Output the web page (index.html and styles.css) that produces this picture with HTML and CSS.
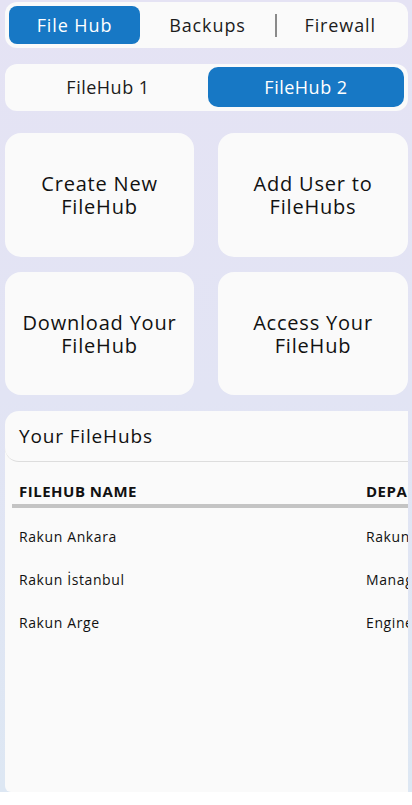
FILE: index.html
```html
<!DOCTYPE html>
<html lang="en">
<head>
<meta charset="utf-8">
<title>FileHub</title>
<link rel="stylesheet" href="styles.css">
</head>
<body>
<div class="app">
  <nav class="tabs">
    <div class="tab active">File Hub</div>
    <div class="tab">Backups</div>
    <div class="sep"></div>
    <div class="tab">Firewall</div>
  </nav>
  <div class="segment">
    <div class="seg">FileHub 1</div>
    <div class="seg active">FileHub 2</div>
  </div>
  <div class="cards">
    <div class="card">Create New<br>FileHub</div>
    <div class="card">Add User to<br>FileHubs</div>
    <div class="card">Download Your<br>FileHub</div>
    <div class="card">Access Your<br>FileHub</div>
  </div>
  <section class="panel">
    <div class="panel-head">Your FileHubs</div>
    <div class="table">
      <div class="row head">
        <div class="c1">FILEHUB NAME</div>
        <div class="c2">DEPARTMENT</div>
      </div>
      <div class="row">
        <div class="c1">Rakun Ankara</div>
        <div class="c2">Rakun</div>
      </div>
      <div class="row">
        <div class="c1">Rakun İstanbul</div>
        <div class="c2">Management</div>
      </div>
      <div class="row">
        <div class="c1">Rakun Arge</div>
        <div class="c2">Engineering</div>
      </div>
    </div>
  </section>
</div>
</body>
</html>
```
FILE: styles.css
```css
* { box-sizing: border-box; }
html, body { margin: 0; padding: 0; background: #ffffff; }
body {
  font-family: "Open Sans", "Noto Sans", sans-serif;
  color: #1a1a1a;
  width: 412px;
  overflow: hidden;
}
.app {
  height: 792px;
  background: linear-gradient(180deg, #e5e3f4 0%, #e2e4f4 50%, #dde7f3 100%);
  padding: 2px 4px 0 5px;
  display: flex;
  flex-direction: column;
  overflow: hidden;
}
.tabs {
  height: 46px;
  background: #fafafa;
  border-radius: 12px;
  display: flex;
  align-items: center;
  padding: 4px;
}
.tab {
  height: 38px;
  display: flex;
  align-items: center;
  justify-content: center;
  font-size: 18px;
  letter-spacing: 0.9px;
  color: #1c1c1c;
  flex: 1;
}
.tab.active {
  flex: 0 0 131px;
  background: #1778c5;
  color: #ffffff;
  border-radius: 8px;
}
.tabs .tab:nth-child(2) { flex: 0 0 135px; }
.sep {
  width: 1.5px;
  height: 23px;
  background: #8a8a8a;
}
.segment {
  margin-top: 16px;
  height: 47px;
  background: #fafafa;
  border-radius: 12px;
  display: flex;
  padding: 3px 4px 4px 3px;
}
.seg {
  flex: 1;
  display: flex;
  align-items: center;
  justify-content: center;
  font-size: 18px;
  letter-spacing: 0.5px;
  color: #1c1c1c;
  border-radius: 10px;
}
.seg.active {
  flex: 0 0 196px;
  background: #1778c5;
  color: #ffffff;
}
.cards {
  margin-top: 22px;
  display: grid;
  grid-template-columns: 189px 190px;
  column-gap: 24px;
  row-gap: 15px;
}
.card {
  height: 124px;
  background: #fafafa;
  border-radius: 16px;
  display: flex;
  align-items: center;
  justify-content: center;
  text-align: center;
  font-size: 20px;
  letter-spacing: 0.8px;
  line-height: 23px;
  color: #111;
}
.cards .card:nth-child(n+3) { height: 123px; }
.panel {
  margin-top: 16px;
  flex: 1;
  background: #fafafa;
  border-radius: 14px 0 0 6px;
  overflow: hidden;
}
.panel-head {
  height: 51px;
  border-bottom: 1.5px solid #dddddd;
  border-radius: 14px 0 0 14px;
  display: flex;
  align-items: center;
  padding-left: 14px;
  font-size: 19px;
  letter-spacing: 0.85px;
  color: #111;
}
.table {
  padding: 0 0 0 7px;
}
.row {
  display: flex;
  height: 43px;
  align-items: center;
  font-size: 14px;
  letter-spacing: 0.6px;
  color: #111;
  white-space: nowrap;
}
.row .c1 { width: 354px; padding-left: 7px; flex: 0 0 354px; }
.row .c2 { flex: 0 0 auto; }
.row.head {
  margin-top: 14px;
  height: 32px;
  border-bottom: 4px solid #c4c4c4;
  font-weight: 700;
  font-size: 15px;
  letter-spacing: 0.5px;
  margin-bottom: 7px;
  align-items: flex-start;
  padding-top: 5px;
}
```
